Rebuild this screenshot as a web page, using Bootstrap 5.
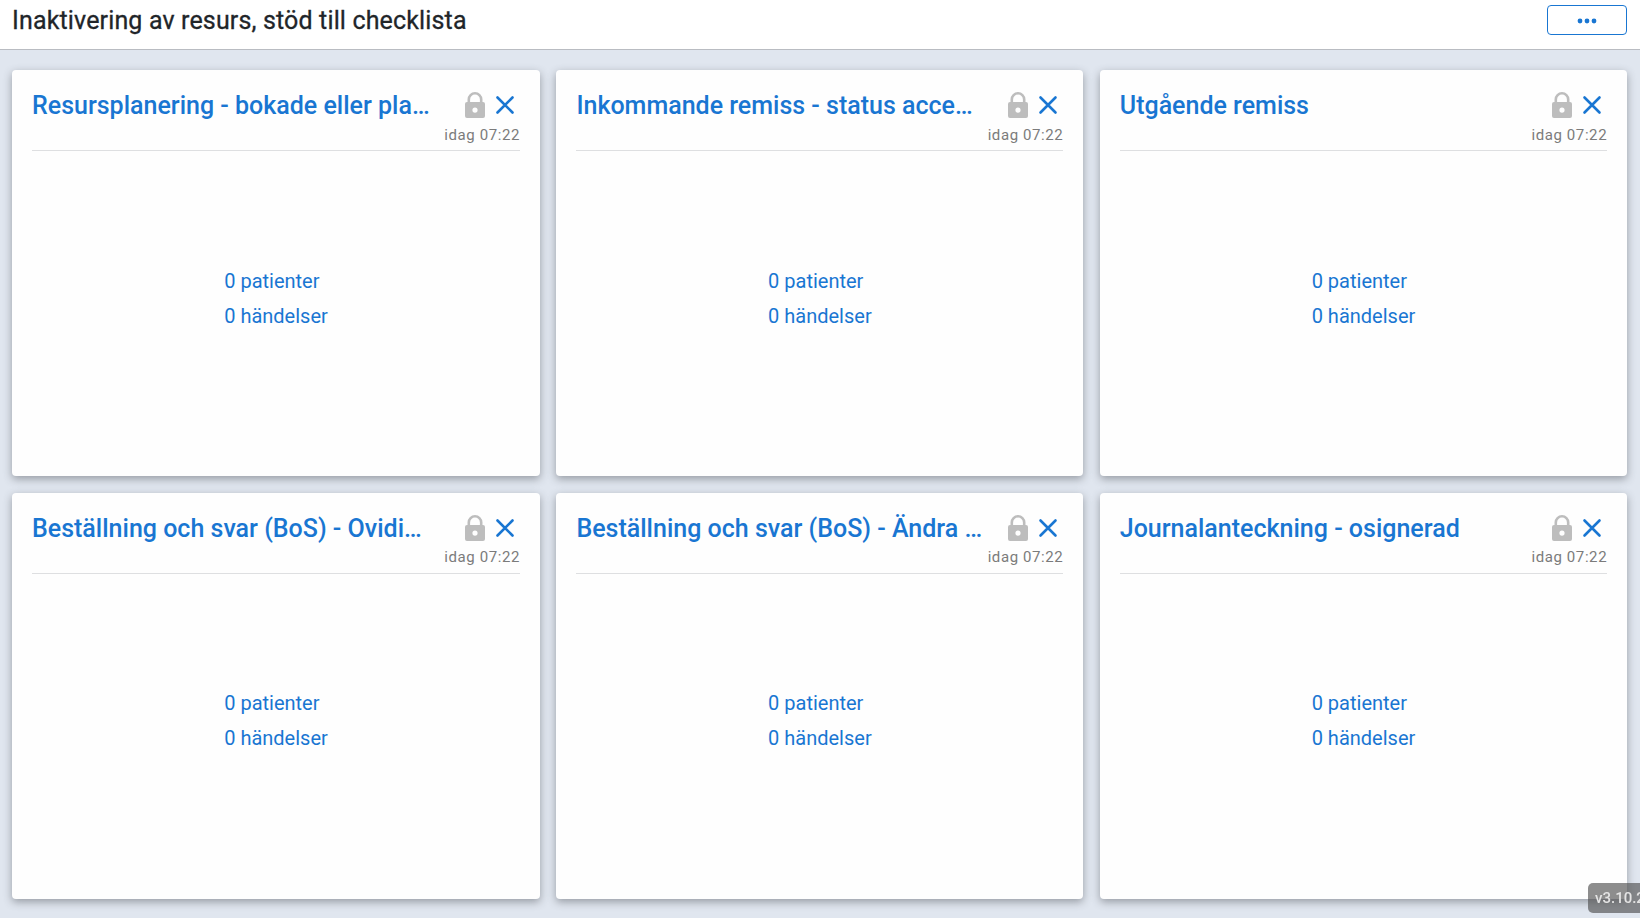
<!DOCTYPE html>
<html lang="sv">

<head>
    <meta charset="UTF-8">
    <meta name="viewport" content="width=device-width, initial-scale=1">
    <title>Inaktivering av resurs</title>
    <link href="https://cdn.jsdelivr.net/npm/bootstrap@5.3.3/dist/css/bootstrap.min.css" rel="stylesheet">
    <style>
        html, body {
          height: 100%;
          overflow: hidden;
        }
        body {
          background: #e0e6ef;
          font-family: Roboto, "Liberation Sans", sans-serif;
        }
        .top-head {
          height: 50px;
          background: #fff;
          border-bottom: 1px solid #b9bcc2;
          padding: 0 13px 0 12px;
        }
        .top-title {
          font-size: 25px;
          font-weight: 400;
          line-height: 40px;
          color: #212529;
          margin: -8px 0 0;
          letter-spacing: .15px;
          -webkit-text-stroke: .3px #212529;
        }
        .more-btn {
          width: 80px;
          height: 30px;
          margin-top: -10px;
          border: 1px solid #1976d2;
          border-radius: 4px;
          background: #fff;
          padding: 2px 0 0;
        }
        .board {
          display: grid;
          grid-template-columns: 528px 527px 527.4px;
          grid-auto-rows: 406px;
          column-gap: 16.4px;
          row-gap: 16.5px;
          padding: 20px 13px 0 12px;
        }
        .panel {
          background: #fefefe;
          border: 0;
          border-radius: 4px;
          box-shadow: 0 3px 8px rgba(60, 64, 72, .45);
          padding: 20px;
        }
        .panel-head {
          height: 61px;
          border-bottom: 1px solid #dedfe1;
        }
        .panel-title {
          font-size: 25px;
          font-weight: 500;
          line-height: 28px;
          color: #1976d2;
          margin: 2px 0 0;
          white-space: nowrap;
        }
        .panel-tools {
          gap: 10px;
          margin: 2px 5px 0 0;
        }
        .panel-time {
          font-size: 15px;
          line-height: 16px;
          letter-spacing: .6px;
          color: #7b7b7b;
          margin-top: 8.6px;
        }
        .panel-body-text {
          color: #1976d2;
          font-size: 20px;
          line-height: 35px;
          padding-top: 112.5px;
        }
        .version-tag {
          position: fixed;
          left: 1588px;
          top: 883px;
          width: 80px;
          height: 30px;
          background: rgba(80, 80, 80, .65);
          color: #e4e4e4;
          border-radius: 5px;
          font-size: 15px;
          font-weight: 500;
          line-height: 30px;
          padding-left: 7px;
        }
    </style>
</head>

<body>
    <div class="top-head d-flex justify-content-between align-items-center">
        <h1 class="top-title">Inaktivering av resurs, stöd till checklista</h1>
        <button class="more-btn d-flex justify-content-center align-items-center" type="button" aria-label="Mer">
            <svg width="20" height="6" viewBox="0 0 20 6"><g fill="#1976d2"><circle cx="3" cy="3" r="2.4"/><circle cx="10" cy="3" r="2.4"/><circle cx="17" cy="3" r="2.4"/></g></svg>
        </button>
    </div>

    <div class="board" id="board"></div>
    <div class="version-tag">v3.10.2</div>

    <script>
        const paneler = [
            'Resursplanering - bokade eller pla…',
            'Inkommande remiss - status acce…',
            'Utgående remiss',
            'Beställning och svar (BoS) - Ovidi…',
            'Beställning och svar (BoS) - Ändra …',
            'Journalanteckning - osignerad'
        ];
        const lock = '<svg width="20" height="26" viewBox="0 0 20 26"><path fill="#bdbdbd" fill-rule="evenodd" d="M2.500 10V7.500a7.500 7.500 0 0 1 15 0V10H18a2 2 0 0 1 2 2v12a2 2 0 0 1-2 2H2a2 2 0 0 1-2-2V12a2 2 0 0 1 2-2zM5.100 10h9.800V7.500a4.900 4.900 0 0 0-9.800 0zM10 15.500a2.600 2.600 0 1 0 0 5.200a2.600 2.600 0 0 0 0-5.200z"/></svg>';
        const cross = '<svg width="20" height="20" viewBox="0 0 20 20"><path stroke="#1976d2" stroke-width="2.600" stroke-linecap="round" d="M2.500 2.500l15 15M17.500 2.500l-15 15"/></svg>';
        document.getElementById('board').innerHTML = paneler.map(namn => `
            <div class="panel">
                <div class="panel-head d-flex justify-content-between">
                    <h2 class="panel-title">${namn}</h2>
                    <div class="text-end">
                        <div class="panel-tools d-flex justify-content-end align-items-center">${lock}${cross}</div>
                        <div class="panel-time">idag 07:22</div>
                    </div>
                </div>
                <div class="panel-body-text d-flex justify-content-center">
                    <div>
                        <div>0 patienter</div>
                        <div>0 händelser</div>
                    </div>
                </div>
            </div>`).join('');
    </script>

    <script src="https://cdn.jsdelivr.net/npm/bootstrap@5.3.3/dist/js/bootstrap.bundle.min.js"></script>
</body>

</html>
